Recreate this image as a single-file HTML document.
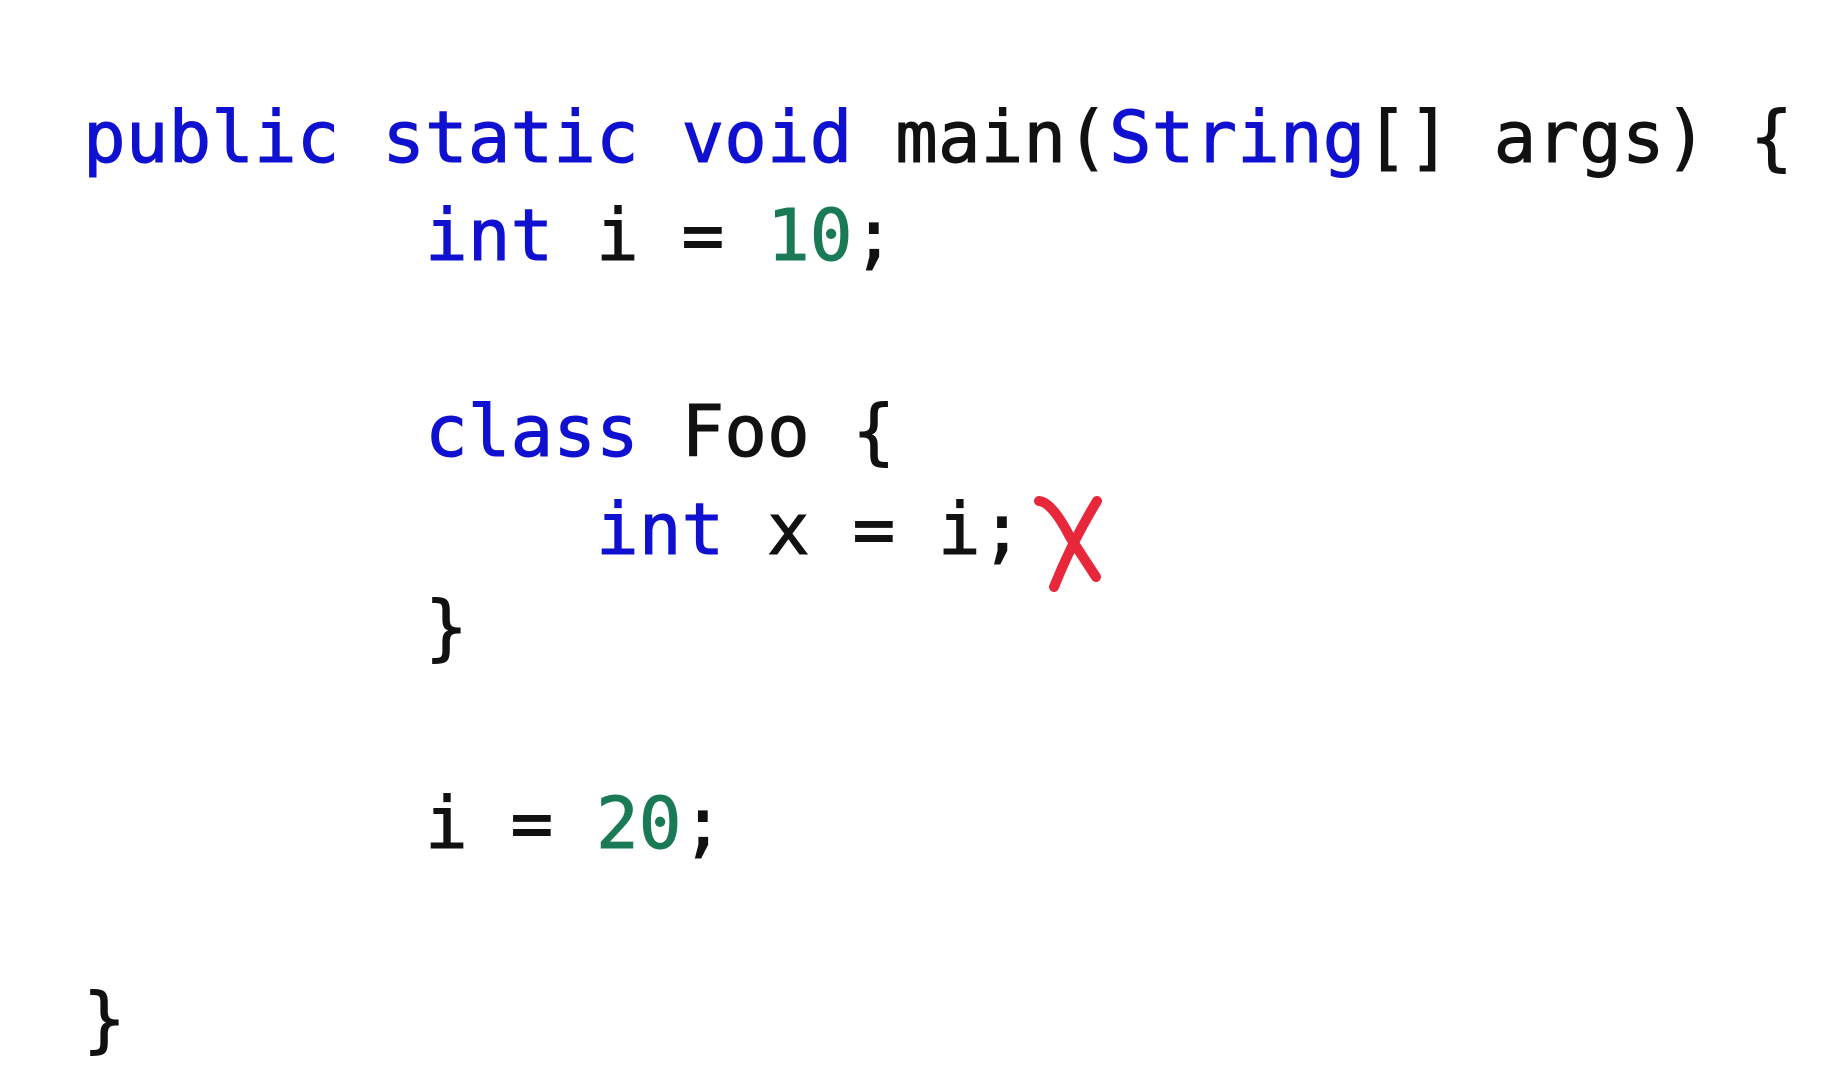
<!DOCTYPE html>
<html><head><meta charset="utf-8"><style>
html,body{margin:0;padding:0;background:#fff;width:1846px;height:1090px;overflow:hidden}
pre{position:absolute;left:83px;top:89px;margin:0;font-family:"DejaVu Sans Mono","Liberation Mono",monospace;font-size:71px;line-height:98px;color:#111;-webkit-text-stroke:1px currentColor}
.k{color:#1010d0}.n{color:#1a7a55}
svg{position:absolute;left:1030px;top:494px}
</style></head><body>
<pre><span class="k">public static void</span> main(<span class="k">String</span>[] args) {
        <span class="k">int</span> i = <span class="n">10</span>;

        <span class="k">class</span> Foo {
            <span class="k">int</span> x = i;
        }

        i = <span class="n">20</span>;

}</pre>
<svg width="80" height="104" viewBox="0 0 80 104"><path d="M9 7 Q22 8 40 43 L66 83" fill="none" stroke="#e8283a" stroke-width="10" stroke-linecap="round"/><path d="M67 7 Q42 48 24 93" fill="none" stroke="#e8283a" stroke-width="10" stroke-linecap="round"/></svg>
</body></html>
